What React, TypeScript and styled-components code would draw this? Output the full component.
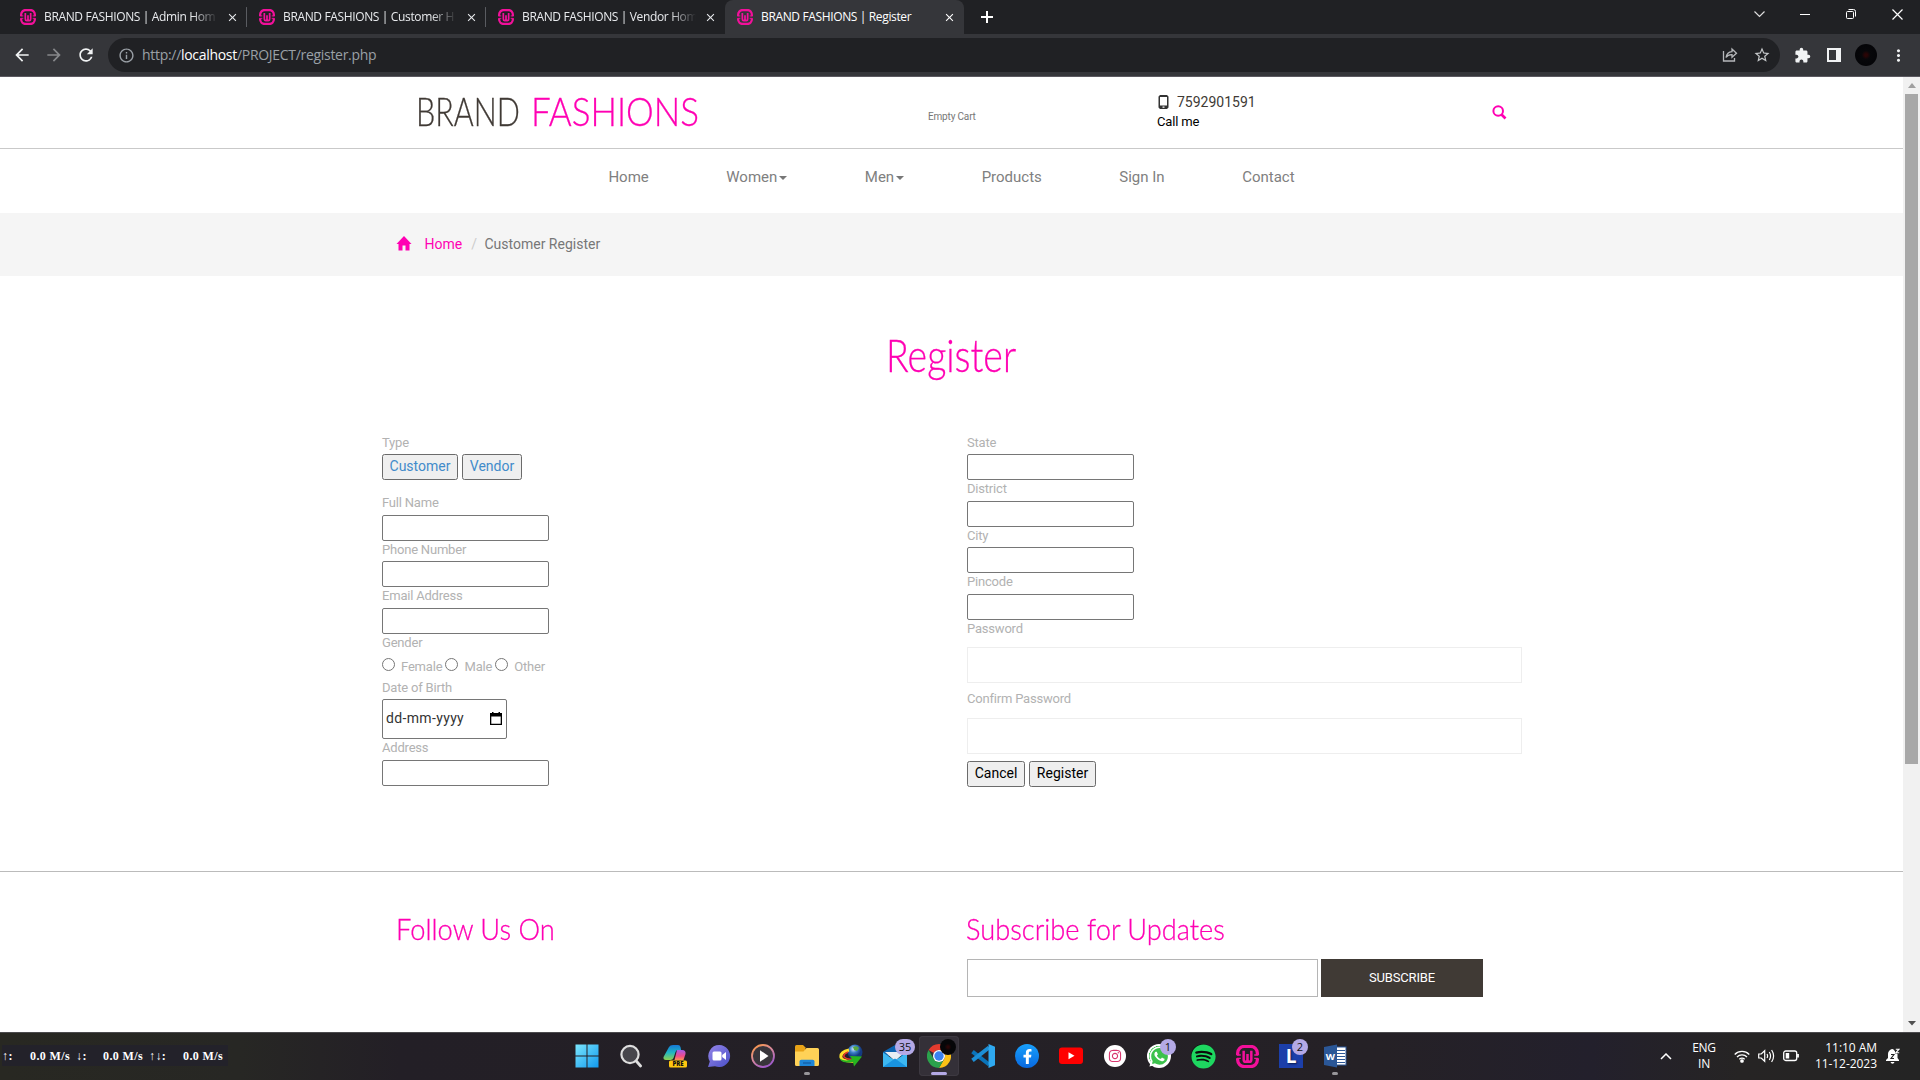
import React from "react";
import styled, { createGlobalStyle } from "styled-components";
import { FaFacebookF, FaInstagram, FaSpotify, FaWhatsapp } from "react-icons/fa";
import { MdArrowBack, MdArrowForward, MdClose, MdExtension, MdInfoOutline, MdMoreVert, MdRefresh, MdStarBorder } from "react-icons/md";

const PINK = "#ff00b3";
const ROBOTO = `Roboto, "Liberation Sans", sans-serif`;
const SEGOE = `"Open Sans", "Noto Sans", sans-serif`;

const Global = createGlobalStyle`
  * { box-sizing: border-box; }
  html, body { margin: 0; background: #fff; }
  body { overflow: hidden; font-family: ${ROBOTO}; }
  svg { display: block; flex: none; }
`;

const Screen = styled.div`
  width: 1920px;
  height: 1080px;
  display: flex;
  flex-direction: column;
  overflow: hidden;
`;

/* ---------- browser chrome ---------- */

const TabStrip = styled.div`
  height: 34px;
  background: #202124;
  display: flex;
  padding-left: 8px;
  flex: none;
`;

const Tab = styled.div<{ $active?: boolean; $divider?: boolean }>`
  width: 239px;
  height: 34px;
  display: flex;
  align-items: center;
  padding: 0 8px 0 12px;
  background-color: ${(p) => (p.$active ? "#35363a" : "transparent")};
  border-radius: 8px 8px 0 0;
  color: ${(p) => (p.$active ? "#fff" : "#e8eaed")};
  background-image: ${(p) => (p.$divider ? "linear-gradient(#5a5c61, #5a5c61)" : "none")};
  background-size: 1px 20px;
  background-position: right 0 top 7px;
  background-repeat: no-repeat;
`;

const TabTitle = styled.div<{ $fade?: boolean }>`
  width: 176px;
  margin: 0 0 0 8px;
  white-space: nowrap;
  font: 12px/16px ${SEGOE};
  letter-spacing: -0.36px;
  padding-bottom: 1px;
  -webkit-mask-image: ${(p) => (p.$fade ? "linear-gradient(90deg, #000 148px, transparent 174px)" : "none")};
`;

const TabClose = styled(MdClose)`
  margin-left: auto;
  width: 13px;
  height: 13px;
`;

const NewTab = styled.div`
  width: 45px;
  display: flex;
  align-items: center;
  justify-content: center;
`;

const WindowButtons = styled.div`
  margin-left: auto;
  display: flex;
  height: 28px;
`;

const WindowButton = styled.div`
  width: 46px;
  display: flex;
  align-items: center;
  justify-content: center;
`;

const Toolbar = styled.div`
  height: 43px;
  flex: none;
  background: #35363a;
  border-bottom: 1px solid #5b5960;
  display: flex;
  align-items: center;
  color: #e8eaed;
`;

const ToolButton = styled.div<{ $w: number; $dim?: boolean }>`
  width: ${(p) => p.$w}px;
  display: flex;
  justify-content: center;
  color: ${(p) => (p.$dim ? "#86888b" : "#f1f3f4")};
`;

const NavButtons = styled.div`
  width: 108px;
  display: flex;
  padding-left: 6px;
`;

const AddressBar = styled.div`
  width: 1672px;
  height: 34px;
  border-radius: 17px;
  background: #202124;
  display: flex;
  align-items: center;
  padding: 0 2px 0 10px;
  color: #9aa0a6;
`;

const Url = styled.div`
  margin-left: 7px;
  font: 14px/20px ${SEGOE};
  letter-spacing: -0.3px;
  color: #9aa0a6;
  flex: 1;
  b { font-weight: 400; color: #fff; }
`;

const Avatar = styled.div`
  width: 22px;
  height: 22px;
  border-radius: 50%;
  background: radial-gradient(#2a0506 0 8%, #07070a 28%, #030306);
`;

/* ---------- web page ---------- */

const Viewport = styled.div`
  height: 955px;
  display: flex;
  flex: none;
`;

const Page = styled.main`
  width: 1903px;
  height: 955px;
  background: #fff;
  overflow: hidden;
`;

const ScrollBar = styled.div`
  width: 17px;
  background: #f1f1f1;
  display: flex;
  flex-direction: column;
  align-items: center;
`;

const ScrollArrow = styled.div`
  height: 17px;
  display: flex;
  align-items: center;
`;

const ScrollThumb = styled.div`
  width: 13px;
  height: 670px;
  background: #a8a8a8;
  margin-bottom: auto;
`;

const Header = styled.header`
  height: 72px;
  border-bottom: 1px solid #c9c9c9;
  display: flex;
  padding-left: 416px;
`;

const Display = styled.span<{ $size: number; $sx: number; $w: number; $dark?: boolean }>`
  display: inline-block;
  width: ${(p) => p.$w}px;
  white-space: nowrap;
  font-family: Lato, "Open Sans", sans-serif;
  font-weight: 300;
  font-size: ${(p) => p.$size}px;
  line-height: 1.2;
  color: ${(p) => (p.$dark ? "#403a35" : PINK)};
  -webkit-text-stroke: 0.3px currentColor;
  transform: scaleX(${(p) => p.$sx});
  transform-origin: left;
`;

const Logo = styled.div`
  width: 512px;
  padding-top: 10px;
  display: flex;
`;

const Cart = styled.div`
  width: 229px;
  padding-top: 33px;
  font-size: 10px;
  line-height: 13px;
  letter-spacing: -0.17px;
  color: #777;
`;

const Phone = styled.div`
  width: 335px;
  padding-top: 15px;
`;

const PhoneLine = styled.div`
  display: flex;
  align-items: center;
  gap: 8px;
  padding-left: 1px;
  height: 20px;
  font-size: 14px;
  color: #403a35;
`;

const CallMe = styled.div`
  padding-top: 1px;
  font-size: 13px;
  line-height: 18px;
  letter-spacing: -0.17px;
  color: #000;
`;

const SearchBox = styled.div`
  padding-top: 28px;
`;

const Nav = styled.nav`
  height: 64px;
  display: flex;
  justify-content: center;
  gap: 77.5px;
  padding-top: 18px;
  font-size: 15px;
  line-height: 20px;
  color: #808080;
`;

const NavItem = styled.div`
  display: flex;
  align-items: center;
  height: 20px;
`;

const Caret = styled.i`
  margin: 1px 0 0 2px;
  border: 4px solid transparent;
  border-top-color: #777;
  border-bottom: 0;
`;

const Breadcrumb = styled.div`
  height: 63px;
  background: #f5f5f5;
  display: flex;
  align-items: center;
  padding: 0 0 1px 396px;
  font-size: 14px;
  line-height: 18px;
  color: #777;
`;

const Crumb = styled.span<{ $tone?: string; $gap: number }>`
  margin-left: ${(p) => p.$gap}px;
  color: ${(p) => p.$tone ?? "#777"};
`;

const TitleRow = styled.h1`
  margin: 0;
  height: 157.43px;
  padding: 51px 0 0 886px;
  display: flex;
`;

const Form = styled.form`
  display: grid;
  grid-template-columns: 585px 556px;
  padding-left: 382px;
  height: 437.57px;
`;

const Column = styled.div`
  display: flex;
  flex-direction: column;
  align-items: flex-start;
`;

const Label = styled.label`
  height: 20.57px;
  padding-top: 0.1px;
  font-size: 13px;
  line-height: 18.6px;
  letter-spacing: -0.2px;
  color: #b2b2b2;
  flex: none;
`;

const TextInput = styled.input`
  width: 167px;
  height: 26px;
  flex: none;
  margin: 0;
  border: 1px solid #767676;
  border-radius: 2px;
  background: #fff;
`;

const WideInput = styled.input<{ $after: number }>`
  width: 555px;
  height: 36px;
  flex: none;
  margin: 7px 0 ${(p) => p.$after}px;
  border: 1px solid #eee;
  background: #fff;
`;

const ButtonRow = styled.div<{ $after?: number }>`
  display: flex;
  gap: 4px;
  height: 26px;
  margin-bottom: ${(p) => p.$after ?? 0}px;
  flex: none;
`;

const Button = styled.button<{ $w: number; $link?: boolean }>`
  width: ${(p) => p.$w}px;
  height: 26px;
  padding: 0 0 2px;
  border: 1px solid #6b6b6b;
  border-radius: 2.5px;
  background: #efefef;
  font: 14px/22px ${ROBOTO};
  color: ${(p) => (p.$link ? "#428bca" : "#000")};
`;

const RadioRow = styled.div`
  display: flex;
  height: 24.1px;
  flex: none;
  font-size: 13px;
  line-height: 25px;
  letter-spacing: -0.17px;
  color: #b2b2b2;
`;

const Radio = styled.input.attrs({ type: "radio" })`
  width: 13px;
  height: 13px;
  margin: 4px 6px 0 0;
`;

const RadioText = styled.span`
  margin-right: 3px;
`;

const DateInput = styled.div`
  width: 125px;
  height: 40px;
  flex: none;
  border: 1px solid #767676;
  border-radius: 2px;
  display: flex;
  align-items: center;
  justify-content: space-between;
  padding: 0 4px 0 3px;
  font-size: 14px;
  line-height: 18px;
  letter-spacing: 0.35px;
  color: #333;
`;

const DateText = styled.span`
  padding-bottom: 1px;
`;

const Footer = styled.footer`
  border-top: 1px solid #bbb;
  display: grid;
  grid-template-columns: 571px 1fr;
  padding: 38px 0 0 396px;
`;

const FooterTitle = styled.h3<{ $shift?: number }>`
  margin: 0 0 0 ${(p) => p.$shift ?? 0}px;
  height: 49px;
  display: flex;
`;

const SubscribeRow = styled.div`
  display: flex;
  gap: 3px;
`;

const EmailInput = styled.input`
  width: 351px;
  height: 38px;
  border: 1px solid #b5b5b5;
  padding: 0;
`;

const SubscribeButton = styled.button`
  width: 162px;
  height: 38px;
  border: 0;
  background: #403a35;
  color: #fff;
  font: 13px/20px ${ROBOTO};
  letter-spacing: -0.15px;
`;

/* ---------- taskbar ---------- */

const Taskbar = styled.div`
  height: 48px;
  flex: none;
  display: flex;
  color: #fff;
  border-top: 1px solid #4b4a4d;
  background: linear-gradient(90deg, #282822 0, #272724 240px, #231f26 400px, #252126 1380px, #23202c 1590px, #262424 1740px, #242424);
`;

const NetMeter = styled.div`
  width: 226px;
  height: 21px;
  margin: 12px 337px 0 2px;
  background: #23222a;
  display: flex;
  font: bold 12px/22.5px "Liberation Serif", serif;
  letter-spacing: 0.4px;
  white-space: pre;
`;

const Meter = styled.span<{ $w: number }>`
  width: ${(p) => p.$w}px;
`;

const Apps = styled.div`
  width: 792px;
  display: flex;
`;

const AppSlot = styled.div<{ $active?: boolean }>`
  position: relative;
  width: 40px;
  height: 40px;
  margin: 3px 2px 0;
  border-radius: 4px;
  display: flex;
  align-items: center;
  justify-content: center;
  background: ${(p) => (p.$active ? "#343038" : "transparent")};
  box-shadow: ${(p) => (p.$active ? "inset 0 0 0 1px #3d3941" : "none")};
`;

const Badge = styled.span<{ $wide?: boolean }>`
  position: absolute;
  top: 3px;
  right: ${(p) => (p.$wide ? 0 : 3)}px;
  width: ${(p) => (p.$wide ? 20 : 16)}px;
  height: 16px;
  border-radius: 8px;
  background: #b4a9e6;
  color: #111;
  font: 11px/16px ${SEGOE};
  text-align: center;
`;

const DarkBadge = styled.span`
  position: absolute;
  top: 3px;
  right: 3px;
  width: 16px;
  height: 16px;
  border-radius: 50%;
  background: radial-gradient(#2a0506 0 8%, #060608 30%);
`;

const Running = styled.span<{ $active?: boolean }>`
  position: absolute;
  bottom: 1px;
  left: ${(p) => (p.$active ? 12 : 17)}px;
  width: ${(p) => (p.$active ? 16 : 6)}px;
  height: 3px;
  border-radius: 2px;
  background: ${(p) => (p.$active ? "#b4a9e6" : "#98969a")};
`;

const Disc = styled.span<{ $bg: string; $size?: number }>`
  width: ${(p) => p.$size ?? 24}px;
  height: ${(p) => p.$size ?? 24}px;
  border-radius: 50%;
  background: ${(p) => p.$bg};
  display: flex;
  align-items: center;
  justify-content: center;
  color: #fff;
`;

const LTile = styled.span`
  width: 24px;
  height: 24px;
  background: #1c3faa;
  font: bold 19px/24px ${SEGOE};
  text-align: center;
  text-shadow: 1px 1px 2px #0a1c50;
`;

const Tray = styled.div`
  margin-left: auto;
  display: flex;
  align-items: center;
  padding: 0 20px 1px 0;
  font: 12px/16px ${SEGOE};
`;

const Lang = styled.div`
  width: 30px;
  margin: 0 15px 0 17px;
  text-align: center;
  letter-spacing: -0.3px;
`;

const StatusIcons = styled.div`
  display: flex;
  gap: 8px;
  align-items: center;
`;

const Clock = styled.div`
  width: 78px;
  margin-right: 9px;
  text-align: right;
  white-space: nowrap;
  letter-spacing: -0.05px;
`;

/* ---------- drawings ---------- */

const Wamp = ({ size }: { size: number }) => (
  <svg width={size} height={size} viewBox="0 0 24 24" fill="none" stroke="#f3109b">
    <path d="M1.700 10.700V8.500a7 7 0 0 1 7-7h6.600a7 7 0 0 1 7 7v2.200M1.700 13.800v1.700a7 7 0 0 0 7 7h6.600a7 7 0 0 0 7-7v-1.700" strokeWidth="3.400" />
    <path d="M1 10.400h4M1 14h4M19 10.400h4M19 14h4" strokeWidth="1.400" />
    <path d="M8 6v9q0 2.500 2 2.500t2-2.500V9.500V15q0 2.500 2 2.500t2-2.500V6" strokeWidth="2.600" />
  </svg>
);

const WindowsIcon = () => (
  <svg width="24" height="24" viewBox="0 0 24 24">
    <defs>
      <linearGradient id="win" x2="1" y2="1"><stop stopColor="#7be6fd" /><stop offset="1" stopColor="#1199ee" /></linearGradient>
    </defs>
    <path fill="url(#win)" d="M.5.5h11v11H.5zM12.500.5h11v11h-11zM.5 12.500h11v11H.5zM12.500 12.500h11v11h-11z" />
  </svg>
);

const TaskSearch = () => (
  <svg width="24" height="24" viewBox="0 0 24 24" fill="#47464c" stroke="#dedede" strokeWidth="2.200" strokeLinecap="round">
    <circle cx="11" cy="10.500" r="8.600" /><path d="M17.200 17l4.400 5" strokeWidth="2.800" />
  </svg>
);

const Copilot = () => (
  <svg width="24" height="24" viewBox="0 0 24 24">
    <defs>
      <linearGradient id="cpa" x2="0" y2="1"><stop stopColor="#1678d8" /><stop offset=".5" stopColor="#1fb5c4" /><stop offset="1" stopColor="#8fd14f" /></linearGradient>
      <linearGradient id="cpb" x2="0" y2="1"><stop stopColor="#a55be8" /><stop offset=".6" stopColor="#ef4b8c" /><stop offset="1" stopColor="#ff9152" /></linearGradient>
    </defs>
    <path fill="url(#cpa)" d="M6 3q1-2 4-2h5q2 0 2.500 2l.6 3h-3q-2 0-2.600 2l-2 6q-.7 2-3 2H3q-3 0-2.500-3z" />
    <path fill="url(#cpb)" d="M14 6h5q4 0 3.500 4l-2 6h-9z" />
    <rect x="6" y="16.500" width="18" height="7" rx="1.500" fill="#ffc70f" />
    <text x="15" y="22.200" fontSize="6" fontWeight="800" fontFamily="Open Sans, sans-serif" textAnchor="middle" fill="#111">PRE</text>
  </svg>
);

const Chat = () => (
  <svg width="24" height="24" viewBox="0 0 24 24">
    <defs><linearGradient id="chat" x2="1" y2="1"><stop stopColor="#9585e8" /><stop offset="1" stopColor="#4a50c8" /></linearGradient></defs>
    <path fill="url(#chat)" d="M12.500 1A11 11 0 1 1 8 22.200L1 23l1.800-5.500A11 11 0 0 1 12.500 1z" />
    <rect x="5.500" y="7.500" width="9" height="9" rx="1.500" fill="#fff" /><path fill="#fff" d="M15.200 11l3.800-3v8l-3.800-3z" />
  </svg>
);

const Player = () => (
  <svg width="24" height="24" viewBox="0 0 24 24">
    <defs><linearGradient id="ply" x2="0.600" y2="1"><stop stopColor="#ff9a3c" /><stop offset=".5" stopColor="#d98a9a" /><stop offset="1" stopColor="#a05bc8" /></linearGradient></defs>
    <circle cx="12" cy="12" r="11" fill="#38353b" stroke="url(#ply)" strokeWidth="1.800" /><path fill="#fff" d="M9 6.200l8.500 5.800L9 17.800z" />
  </svg>
);

const Folder = () => (
  <svg width="24" height="24" viewBox="0 0 24 24">
    <path fill="#e8a317" d="M0 2.500Q0 1 1.500 1H8l2.500 2.500V8H0z" />
    <path fill="#ffd257" d="M0 7.500h8.500l3-3.500h11Q24 4 24 5.500v15q0 1.500-1.500 1.500h-21Q0 22 0 20.500z" />
    <path fill="#1e86d8" d="M4.500 22v-4.500q0-1.800 1.800-1.800h11.400q1.800 0 1.800 1.800V22z" /><path stroke="#1560a8" d="M8 19h8" strokeWidth="1.400" />
  </svg>
);

const Idm = () => (
  <svg width="24" height="24" viewBox="0 0 24 24">
    <defs><radialGradient id="glb" cx=".4" cy=".3"><stop stopColor="#d7ecff" /><stop offset=".5" stopColor="#3c7fc8" /><stop offset="1" stopColor="#143a80" /></radialGradient></defs>
    <circle cx="16" cy="8" r="7.500" fill="url(#glb)" /><path fill="#58a640" d="M14 3q4-2 6 1l-2 3-3-1z" />
    <path d="M10 6Q1 8 2 13.500Q4 18 16 17" fill="none" stroke="#ffe02b" strokeWidth="3" />
    <path d="M9 8Q4 10 5 13q3 3 9 2" fill="none" stroke="#e6382c" strokeWidth="1.600" />
    <path fill="#27b51f" d="M11 12l12 .5-8 10-1-4.500Q3 20 .5 14.500 7 18 13 15z" />
  </svg>
);

const Mail = () => (
  <svg width="24" height="24" viewBox="0 0 24 24">
    <path fill="#0c63b0" d="M0 8L12 1l12 7v4H0z" /><path fill="#e9eef3" d="M2 8h20l-10 9z" />
    <path fill="#3db8f2" d="M0 8.500l12 8 12-8V23H0z" /><path fill="#1994e0" d="M0 23l12-8.500L24 23z" />
  </svg>
);

const Chrome = () => (
  <svg width="24" height="24" viewBox="0 0 24 24">
    <path fill="#e33b2e" d="M12 0a12 12 0 0 1 10.400 6H12a6 6 0 0 0-5.200 3L1.600 6A12 12 0 0 1 12 0z" />
    <path fill="#fbc116" d="M22.400 6A12 12 0 0 1 12 24l5.200-9A6 6 0 0 0 17 8.500L12 6z" />
    <path fill="#2ba24c" d="M1.600 6A12 12 0 0 0 12 24l5.200-9a6 6 0 0 1-10.400 0z" />
    <circle cx="12" cy="12" r="6" fill="#fff" /><circle cx="12" cy="12" r="4.700" fill="#3b82f0" />
  </svg>
);

const VsCode = () => (
  <svg width="24" height="24" viewBox="0 0 24 24">
    <path d="M1.500 7.700L18 20.500" stroke="#0a74ba" strokeWidth="4" /><path d="M1.500 16.300L18 3.500" stroke="#1c8fd6" strokeWidth="4" />
    <path fill="#2fa9f0" d="M17.500 0L24 2.800v18.400L17.500 24z" />
  </svg>
);

const YouTube = () => (
  <svg width="24" height="18" viewBox="0 0 24 18"><rect y=".5" width="24" height="16.500" rx="3" fill="#f00" /><path fill="#fff" d="M9.500 5.300l6 3.500-6 3.500z" /></svg>
);

const Word = () => (
  <svg width="24" height="24" viewBox="0 0 24 24">
    <rect x="12" y="3" width="11" height="18" fill="#fff" stroke="#2b5797" />
    <path stroke="#2b5797" d="M14 6.500h8M14 9.500h8M14 12.500h8M14 15.500h8M14 18.500h8" />
    <path fill="#2b5797" d="M1 3l13-2.500v23L1 21z" />
    <text x="7.300" y="15.500" fontSize="9.500" fontWeight="700" fontFamily="Open Sans, sans-serif" textAnchor="middle" fill="#fff">W</text>
  </svg>
);

const tabs = ["BRAND FASHIONS | Admin Hom", "BRAND FASHIONS | Customer H", "BRAND FASHIONS | Vendor Hom", "BRAND FASHIONS | Register"];
const nav: [string, boolean][] = [["Home", false], ["Women", true], ["Men", true], ["Products", false], ["Sign In", false], ["Contact", false]];

const Field = ({ label }: { label: string }) => (
  <>
    <Label>{label}</Label>
    <TextInput />
  </>
);

const BrowserChrome = () => (
  <>
    <TabStrip>
      {tabs.map((t, i) => (
        <Tab key={t} $active={i === 3} $divider={i < 2}>
          <Wamp size={16} />
          <TabTitle $fade={i < 3}>{t}</TabTitle>
          <TabClose />
        </Tab>
      ))}
      <NewTab><svg width="12" height="12" stroke="#fff" strokeWidth="2"><path d="M6 0v12M0 6h12" /></svg></NewTab>
      <WindowButtons>
        <WindowButton><svg width="11" height="7" fill="none" stroke="#ddd" strokeWidth="1.200"><path d="M.5.5l5 5 5-5" /></svg></WindowButton>
        <WindowButton><svg width="10" height="1"><rect width="10" height="1" fill="#fff" /></svg></WindowButton>
        <WindowButton><svg width="10" height="10" fill="none" stroke="#fff"><rect x=".5" y="2.500" width="7" height="7" rx="1" /><path d="M2.500.5h5q2 0 2 2v5" /></svg></WindowButton>
        <WindowButton><svg width="11" height="11" stroke="#fff" strokeWidth="1.200"><path d="M.5.5l10 10M10.500.5l-10 10" /></svg></WindowButton>
      </WindowButtons>
    </TabStrip>
    <Toolbar>
      <NavButtons>
        <ToolButton $w={32}><MdArrowBack size={20} /></ToolButton>
        <ToolButton $w={32} $dim><MdArrowForward size={20} /></ToolButton>
        <ToolButton $w={32}><MdRefresh size={20} /></ToolButton>
      </NavButtons>
      <AddressBar>
        <MdInfoOutline size={17} />
        <Url>http://<b>localhost</b>/PROJECT/register.php</Url>
        <ToolButton $w={32} $dim>
          <svg width="16" height="16" fill="none" stroke="#b5b7ba" strokeWidth="1.300"><path d="M1.500 4v10h11v-3" /><path d="M4 10.500Q5 5 10 4.700V2l4.500 4.200L10 10.300V7.700Q6 7.500 4 10.500z" /></svg>
        </ToolButton>
        <ToolButton $w={32}><MdStarBorder size={18} color="#c4c7c9" /></ToolButton>
      </AddressBar>
      <ToolButton $w={44}><MdExtension size={17} /></ToolButton>
      <ToolButton $w={20}><svg width="14" height="14"><path fill="#f1f3f4" fillRule="evenodd" d="M0 0h14v14H0zM2 2v10h7V2z" /></svg></ToolButton>
      <ToolButton $w={44}><Avatar /></ToolButton>
      <ToolButton $w={20}><MdMoreVert size={19} /></ToolButton>
    </Toolbar>
  </>
);

const apps: { icon: React.ReactNode; extra?: React.ReactNode; active?: boolean }[] = [
  { icon: <WindowsIcon /> },
  { icon: <TaskSearch /> },
  { icon: <Copilot /> },
  { icon: <Chat /> },
  { icon: <Player /> },
  { icon: <Folder />, extra: <Running /> },
  { icon: <Idm /> },
  { icon: <Mail />, extra: <Badge $wide>35</Badge> },
  { icon: <Chrome />, active: true, extra: <><DarkBadge /><Running $active /></> },
  { icon: <VsCode /> },
  { icon: <Disc $bg="linear-gradient(#18a0fb,#0868e0)"><FaFacebookF size={15} /></Disc> },
  { icon: <YouTube /> },
  { icon: <Disc $bg="#fff" $size={22}><FaInstagram size={14} color="#d8366f" /></Disc> },
  { icon: <Disc $bg="radial-gradient(#3cc24c 0 58%, #fff 60%)"><FaWhatsapp size={23} /></Disc>, extra: <Badge>1</Badge> },
  { icon: <Disc $bg="#0c0c0c"><FaSpotify size={25} color="#1ed760" /></Disc> },
  { icon: <Wamp size={23} /> },
  { icon: <LTile>L</LTile>, extra: <Badge>2</Badge> },
  { icon: <Word />, extra: <Running /> },
];

export default function App() {
  return (
    <Screen>
      <Global />
      <BrowserChrome />
      <Viewport>
        <Page>
          <Header>
            <Logo>
              <Display $size={40} $sx={0.762} $w={115} $dark>BRAND</Display>
              <Display $size={40} $sx={0.876} $w={170}>FASHIONS</Display>
            </Logo>
            <Cart>Empty Cart</Cart>
            <Phone>
              <PhoneLine>
                <svg width="11" height="14"><path fill="#333" fillRule="evenodd" d="M2 0h7l1.500 1.500v11L9 14H2L.5 12.500v-11zM2 2v8.500h7V2zM4.500 11.500v1.300h2v-1.300z" /></svg>
                <span>7592901591</span>
              </PhoneLine>
              <CallMe>Call me</CallMe>
            </Phone>
            <SearchBox>
              <svg width="15" height="15" fill="none" stroke={PINK} strokeWidth="2"><circle cx="6.200" cy="6" r="4.800" /><path d="M9.500 9.500l4 4" strokeWidth="2.600" /></svg>
            </SearchBox>
          </Header>
          <Nav>
            {nav.map(([name, menu]) => (
              <NavItem key={name}>{name}{menu && <Caret />}</NavItem>
            ))}
          </Nav>
          <Breadcrumb>
            <svg width="16" height="16" fill={PINK}><path d="M8 0l7.500 8h-2v6.500H9.500v-5h-3v5H2.500V8h-2z" /></svg>
            <Crumb $gap={12.5} $tone={PINK}>Home</Crumb>
            <Crumb $gap={9} $tone="#ccc">/</Crumb>
            <Crumb $gap={7.5}>Customer Register</Crumb>
          </Breadcrumb>
          <TitleRow><Display $size={46} $sx={0.815} $w={130}>Register</Display></TitleRow>
          <Form>
            <Column>
              <Label>Type</Label>
              <ButtonRow $after={14.1}>
                <Button type="button" $w={76} $link>Customer</Button>
                <Button type="button" $w={60} $link>Vendor</Button>
              </ButtonRow>
              <Field label="Full Name" />
              <Field label="Phone Number" />
              <Field label="Email Address" />
              <Label>Gender</Label>
              <RadioRow>
                <Radio name="g" /><RadioText>Female</RadioText>
                <Radio name="g" /><RadioText>Male</RadioText>
                <Radio name="g" /><RadioText>Other</RadioText>
              </RadioRow>
              <Label>Date of Birth</Label>
              <DateInput>
                <DateText>dd-mm-yyyy</DateText>
                <svg width="12" height="13"><path fill="#000" fillRule="evenodd" d="M2 0h1.500v1h5V0H10v1h2v12H0V1h2zM1.300 4.500v7.200h9.400V4.500z" /></svg>
              </DateInput>
              <Field label="Address" />
            </Column>
            <Column>
              <Field label="State" />
              <Field label="District" />
              <Field label="City" />
              <Field label="Pincode" />
              <Label>Password</Label>
              <WideInput $after={7} />
              <Label>Confirm Password</Label>
              <WideInput $after={7} />
              <ButtonRow>
                <Button type="button" $w={58}>Cancel</Button>
                <Button type="button" $w={67}>Register</Button>
              </ButtonRow>
            </Column>
          </Form>
          <Footer>
            <FooterTitle><Display $size={30} $sx={0.91} $w={160}>Follow Us On</Display></FooterTitle>
            <div>
              <FooterTitle $shift={-1}><Display $size={30} $sx={0.908} $w={260}>Subscribe for Updates</Display></FooterTitle>
              <SubscribeRow>
                <EmailInput />
                <SubscribeButton>SUBSCRIBE</SubscribeButton>
              </SubscribeRow>
            </div>
          </Footer>
        </Page>
        <ScrollBar>
          <ScrollArrow><svg width="8" height="5" fill="#a0a0a0"><path d="M0 5l4-5 4 5z" /></svg></ScrollArrow>
          <ScrollThumb />
          <ScrollArrow><svg width="8" height="5" fill="#505050"><path d="M0 0l4 4.500L8 0z" /></svg></ScrollArrow>
        </ScrollBar>
      </Viewport>
      <Taskbar>
        <NetMeter>
          <Meter $w={28}>↑:</Meter><Meter $w={46}>0.0 M/s</Meter>
          <Meter $w={27}>↓:</Meter><Meter $w={46}>0.0 M/s</Meter>
          <Meter $w={34}>↑↓:</Meter><Meter $w={45}>0.0 M/s</Meter>
        </NetMeter>
        <Apps>
          {apps.map((a, i) => (
            <AppSlot key={i} $active={a.active}>{a.icon}{a.extra}</AppSlot>
          ))}
        </Apps>
        <Tray>
          <svg width="12" height="7" fill="none" stroke="#fff" strokeWidth="1.500"><path d="M1 6l5-5 5 5" /></svg>
          <Lang>ENG<br />IN</Lang>
          <StatusIcons>
            <svg width="16" height="14" fill="none" stroke="#fff" strokeWidth="1.300"><path d="M.7 5.500a10.300 10.300 0 0 1 14.600 0M3 8a7 7 0 0 1 10 0M5.300 10.300a4 4 0 0 1 5.400 0" /><circle cx="8" cy="12" r="1.200" fill="#fff" /></svg>
            <svg width="17" height="14" fill="none" stroke="#fff" strokeWidth="1.200"><path d="M.7 5h2.500l3.500-3.300v10.600L3.200 9H.7zM9 5q1.200 2 0 4M11.300 3q2.500 4 0 8M13.600 1q4 6 0 12" /></svg>
            <svg width="16" height="12" fill="none" stroke="#fff" strokeWidth="1.300"><rect x=".7" y="1" width="13" height="9.500" rx="2" /><rect x="2.700" y="3" width="3.500" height="5.500" fill="#fff" stroke="none" /><path d="M15 4v3.500" strokeWidth="1.800" /></svg>
          </StatusIcons>
          <Clock>11:10 AM<br />11-12-2023</Clock>
          <svg width="14" height="16" viewBox="0 0 14 16"><path fill="#fff" d="M7 1a5 5 0 0 0-5 5v4L0 12v1h13v-1l-1.500-2V6zM4.500 14h4q-.5 1.700-2 1.700t-2-1.700z" /><path d="M5 6.500h3l-3 4h3" stroke="#242424" fill="none" strokeWidth="1.100" /><path fill="#242424" d="M9 0H14v5.500H9z" /><path d="M9.800 1.200h3.200L9.800 4.800h3.400" stroke="#fff" fill="none" strokeWidth="1.100" /></svg>
        </Tray>
      </Taskbar>
    </Screen>
  );
}
